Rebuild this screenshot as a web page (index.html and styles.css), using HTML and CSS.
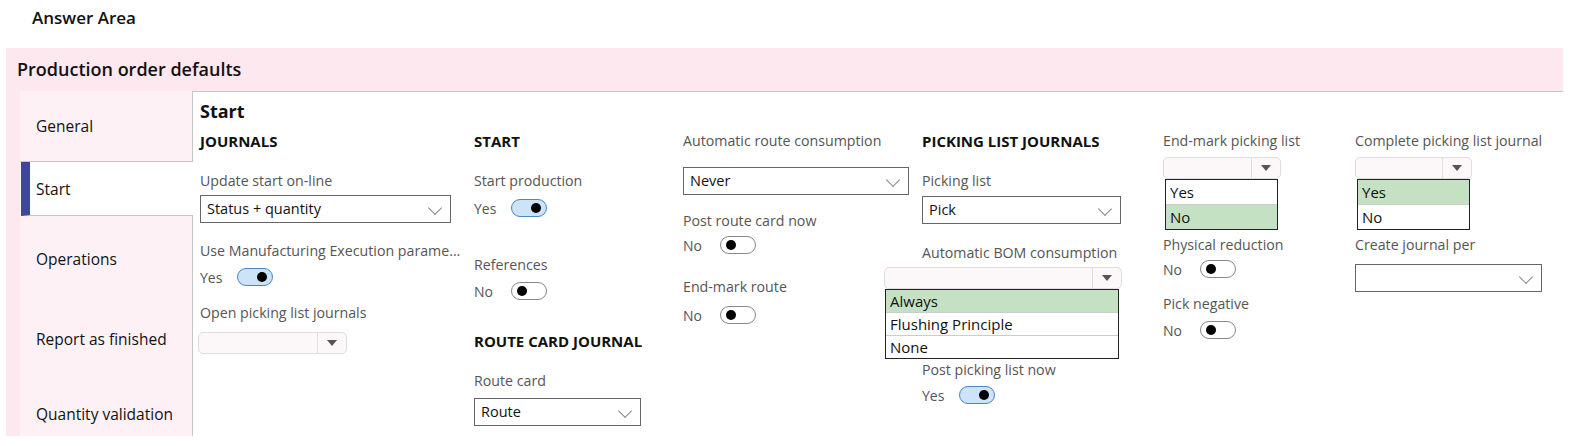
FILE: index.html
```html
<!DOCTYPE html>
<html lang="en">
<head>
    <meta charset="UTF-8">
    <meta name="viewport" content="width=device-width, initial-scale=1.0">
    <title>Production order defaults</title>
    <link rel="stylesheet" href="styles.css">
</head>
<body>

<div class="answer-title">Answer Area</div>

<div class="panel">
    <div class="panel-title">Production order defaults</div>

    <div class="panel-body">
        <div class="nav">
            <div class="tab tab-general">General</div>
            <div class="tab tab-start active">Start</div>
            <div class="tab tab-operations">Operations</div>
            <div class="tab tab-report">Report as finished</div>
            <div class="tab tab-quantity">Quantity validation</div>
        </div>

        <div class="content">
            <h2 class="page-title">Start</h2>

            <div class="columns">
                <!-- journals -->
                <div class="col col-1">
                    <div class="heading">JOURNALS</div>
                    <div class="label gap-20">Update start on-line</div>
                    <div class="select w-251 gap-4">Status + quantity<span class="chevron"></span></div>
                    <div class="label gap-18">Use Manufacturing Execution parame...</div>
                    <div class="toggle-row gap-5"><span class="toggle-text">Yes</span><span class="toggle on"></span></div>
                    <div class="label gap-15">Open picking list journals</div>
                    <div class="dropdown w-149 shift-2 gap-9"><span class="arrow"></span></div>
                </div>

                <!-- start -->
                <div class="col col-2">
                    <div class="heading">START</div>
                    <div class="label gap-20">Start production</div>
                    <div class="toggle-row gap-6"><span class="toggle-text">Yes</span><span class="toggle on"></span></div>
                    <div class="label gap-36">References</div>
                    <div class="toggle-row gap-5"><span class="toggle-text">No</span><span class="toggle"></span></div>
                    <div class="heading gap-29">ROUTE CARD JOURNAL</div>
                    <div class="label gap-20">Route card</div>
                    <div class="select w-167 gap-7">Route<span class="chevron"></span></div>
                </div>

                <!-- route consumption -->
                <div class="col col-3">
                    <div class="label">Automatic route consumption</div>
                    <div class="select w-226 gap-16">Never<span class="chevron"></span></div>
                    <div class="label gap-16">Post route card now</div>
                    <div class="toggle-row gap-3"><span class="toggle-text">No</span><span class="toggle"></span></div>
                    <div class="label gap-21">End-mark route</div>
                    <div class="toggle-row gap-7"><span class="toggle-text">No</span><span class="toggle"></span></div>
                </div>

                <!-- picking list journals -->
                <div class="col col-4">
                    <div class="heading">PICKING LIST JOURNALS</div>
                    <div class="label gap-20">Picking list</div>
                    <div class="select w-199 gap-5">Pick<span class="chevron"></span></div>
                    <div class="label gap-19">Automatic BOM consumption</div>
                    <div class="dropdown w-238 shift-38 gap-4"><span class="arrow"></span></div>
                    <ul class="options w-234 shift-37">
                        <li class="picked">Always</li>
                        <li>Flushing Principle</li>
                        <li>None</li>
                    </ul>
                    <div class="label gap-1">Post picking list now</div>
                    <div class="toggle-row gap-4"><span class="toggle-text">Yes</span><span class="toggle on"></span></div>
                </div>

                <div class="col col-5">
                    <div class="label">End-mark picking list</div>
                    <div class="dropdown w-118 gap-6"><span class="arrow"></span></div>
                    <ul class="options small w-113 nudge-2">
                        <li>Yes</li>
                        <li class="picked">No</li>
                    </ul>
                    <div class="label gap-5">Physical reduction</div>
                    <div class="toggle-row gap-3"><span class="toggle-text">No</span><span class="toggle"></span></div>
                    <div class="label gap-14">Pick negative</div>
                    <div class="toggle-row gap-5"><span class="toggle-text">No</span><span class="toggle"></span></div>
                </div>

                <div class="col col-6">
                    <div class="label">Complete picking list journal</div>
                    <div class="dropdown w-117 gap-6"><span class="arrow"></span></div>
                    <ul class="options small w-113 nudge-2">
                        <li class="picked">Yes</li>
                        <li>No</li>
                    </ul>
                    <div class="label gap-5">Create journal per</div>
                    <div class="select w-187 gap-9"><span class="chevron"></span></div>
                </div>
            </div>
        </div>
    </div>
</div>

</body>
</html>
```

FILE: styles.css
```css
body {
    margin: 0;
    font-family: "Open Sans", "Noto Sans", sans-serif;
    color: #111;
    background: #fff;
}
.answer-title {
    padding: 6px 0 0 32px;
    height: 48px;
    box-sizing: border-box;
    font-size: 17px;
    font-weight: 600;
    line-height: 24px;
}
.panel {
    margin-left: 6px;
    width: 1557px;
    height: 388px;
    background: #fde8ef;
    display: flex;
    flex-direction: column;
    overflow: hidden;
}
.panel-title {
    height: 43px;
    padding-left: 11px;
    font-size: 18px;
    font-weight: 600;
    line-height: 43px;
    box-sizing: border-box;
}
.panel-body {
    flex: 1;
    display: flex;
    min-height: 0;
}
.nav {
    width: 172px;
    margin-left: 14px;
    background: #fdf1f5;
    border-right: 1px solid #c9c4c6;
    display: flex;
    flex-direction: column;
}
.tab {
    display: flex;
    align-items: center;
    padding-left: 16px;
    font-size: 15.5px;
    flex-shrink: 0;
}
.tab-general {
    height: 70px;
    border-bottom: 1px solid #c9c4c6;
}
.tab-start {
    height: 53px;
    background: #fff;
    border-bottom: 1px solid #c9c4c6;
    border-left: 9px solid #3e479f;
    padding-left: 6px;
    margin-right: -1px;
    margin-left: 1px;
}
.tab-operations { height: 86px; }
.tab-report { height: 74px; }
.tab-quantity { height: 76px; }

.content {
    flex: 1;
    background: #fff;
    border-top: 1px solid #c9c4c6;
    padding: 7px 0 0 7px;
}
.page-title {
    margin: 0;
    font-size: 18px;
    font-weight: 700;
    line-height: 24px;
}
.columns {
    display: flex;
    margin-top: 8px;
}
.col {
    display: flex;
    flex-direction: column;
    align-items: flex-start;
}
.col-1 { width: 274px; }
.col-2 { width: 209px; }
.col-3 { width: 239px; }
.col-4 { width: 241px; }
.col-5 { width: 192px; }
.col-6 { width: 200px; }

.heading {
    font-size: 15px;
    font-weight: 700;
    line-height: 20px;
    white-space: nowrap;
}
.label {
    font-size: 14.2px;
    line-height: 20px;
    color: #555;
    white-space: nowrap;
}
.select {
    position: relative;
    height: 28px;
    box-sizing: border-box;
    border: 1px solid #666;
    padding-left: 6px;
    font-size: 14.5px;
    line-height: 26px;
    color: #111;
}
.chevron {
    position: absolute;
    right: 10px;
    top: 7px;
    width: 9px;
    height: 9px;
    border-right: 1px solid #888;
    border-bottom: 1px solid #888;
    transform: rotate(45deg);
}
.dropdown {
    position: relative;
    height: 22px;
    box-sizing: border-box;
    border: 1px solid #e2dcde;
    border-radius: 5px;
    background: #fcf7f8;
}
.arrow {
    position: absolute;
    right: 0;
    top: 0;
    width: 28px;
    height: 20px;
    border-left: 1px solid #e2dcde;
}
.arrow::after {
    content: "";
    position: absolute;
    left: 9px;
    top: 7px;
    border-left: 5px solid transparent;
    border-right: 5px solid transparent;
    border-top: 6px solid #555;
}
.options {
    list-style: none;
    margin: 0;
    padding: 0;
    border: 1.5px solid #222;
    box-sizing: border-box;
    background: #fff;
}
.options li {
    height: 22px;
    line-height: 22px;
    padding-left: 4px;
    font-size: 15px;
    color: #111;
    border-top: 1px solid #ccc;
}
.options li:first-child {
    border-top: none;
}
.options.small li {
    height: 24px;
    line-height: 24px;
}
.options .picked {
    background: #c5e1c3;
}

.toggle-row {
    display: flex;
    align-items: center;
    height: 22px;
}
.toggle-text {
    width: 37px;
    font-size: 14px;
    color: #555;
}
.toggle {
    position: relative;
    width: 36px;
    height: 18px;
    box-sizing: border-box;
    border: 1px solid #888;
    border-radius: 10px;
    background: #fff;
}
.toggle::after {
    content: "";
    position: absolute;
    left: 5px;
    top: 3px;
    width: 10px;
    height: 10px;
    border-radius: 50%;
    background: #000;
}
.toggle.on {
    background: #cde3f7;
    border-color: #4b86c6;
}
.toggle.on::after {
    left: auto;
    right: 5px;
}

.w-113 { width: 113px; }
.w-117 { width: 117px; }
.w-118 { width: 118px; }
.w-149 { width: 149px; }
.w-167 { width: 167px; }
.w-187 { width: 187px; }
.w-199 { width: 199px; }
.w-226 { width: 226px; }
.w-234 { width: 234px; }
.w-238 { width: 238px; }
.w-251 { width: 251px; }
.shift-2 { margin-left: -2px; }
.shift-37 { margin-left: -37px; }
.shift-38 { margin-left: -38px; }
.nudge-2 { margin-left: 2px; }

.gap-1 { margin-top: 1px; }
.gap-3 { margin-top: 3px; }
.gap-4 { margin-top: 4px; }
.gap-5 { margin-top: 5px; }
.gap-6 { margin-top: 6px; }
.gap-7 { margin-top: 7px; }
.gap-9 { margin-top: 9px; }
.gap-14 { margin-top: 14px; }
.gap-15 { margin-top: 15px; }
.gap-16 { margin-top: 16px; }
.gap-18 { margin-top: 18px; }
.gap-19 { margin-top: 19px; }
.gap-20 { margin-top: 20px; }
.gap-21 { margin-top: 21px; }
.gap-29 { margin-top: 29px; }
.gap-36 { margin-top: 36px; }
```
